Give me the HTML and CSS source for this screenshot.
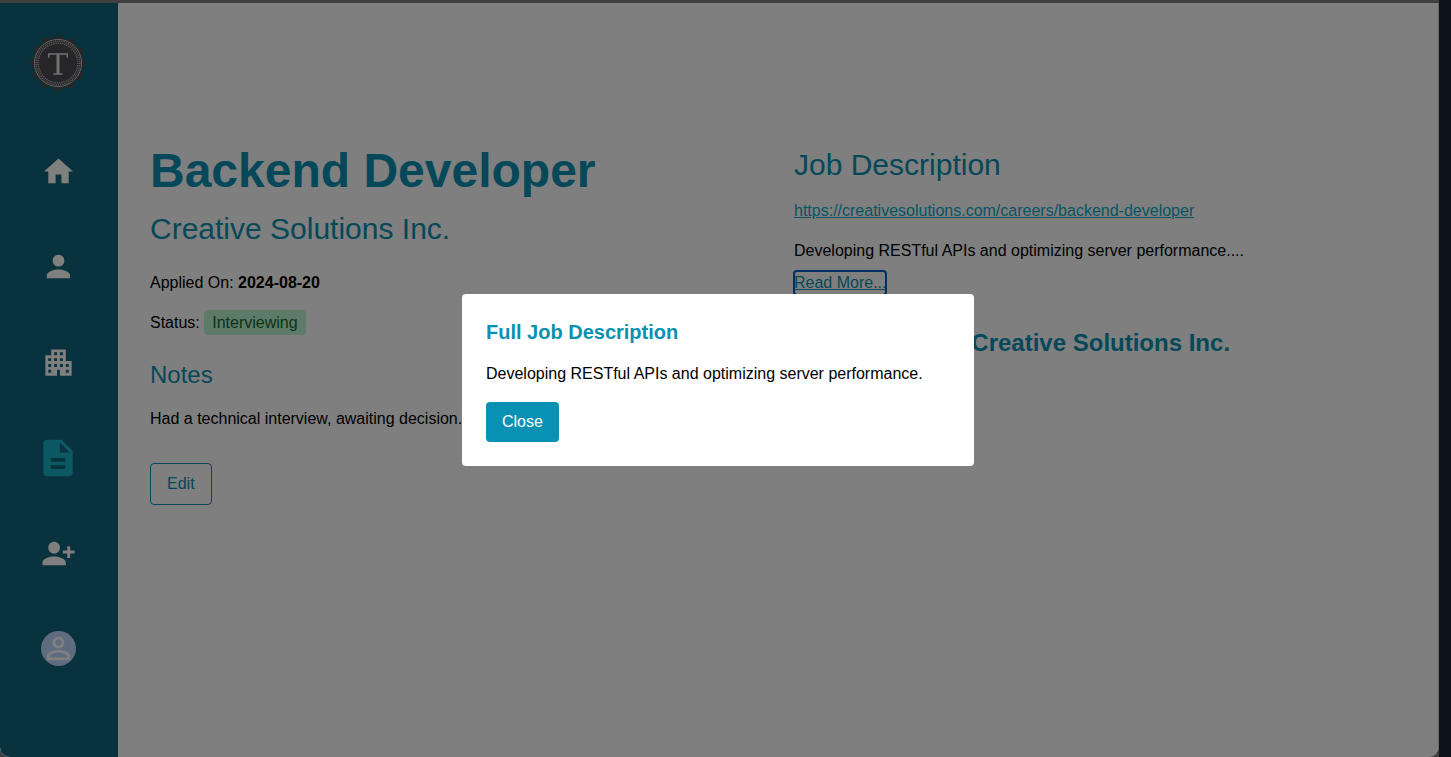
FILE: index.html
```html
<!DOCTYPE html>
<html lang="en">
<head>
<meta charset="utf-8">
<meta name="viewport" content="width=device-width, initial-scale=1">
<title>Backend Developer</title>
<link rel="stylesheet" href="styles.css">
</head>
<body>
<div class="window">
  <aside class="sidebar">
    <a class="logo" href="#" aria-label="Home page">
      <svg viewBox="0 0 56 56" aria-hidden="true">
        <circle cx="28" cy="28" r="25" fill="#4c4c50"/>
        <circle cx="28" cy="28" r="23.500" fill="none" stroke="#4c4c50" stroke-width="9" stroke-linecap="round" stroke-dasharray="0 12.304"/>
        <circle cx="28" cy="28" r="23.600" fill="none" stroke="#c4c4c4" stroke-width="1"/>
        <circle cx="28" cy="28" r="21.800" fill="none" stroke="#b4b4b4" stroke-width="1.400" stroke-dasharray="1.200 1"/>
        <circle cx="28" cy="28" r="19.800" fill="none" stroke="#b4b4b4" stroke-width="1.400" stroke-dasharray="1.200 1"/>
        <path d="M18.800 22.800v-3.800h18.400v3.800M23.500 39h9" fill="none" stroke="#e0e0e0" stroke-width="1.500"/>
        <path d="M28 19v20" stroke="#e0e0e0" stroke-width="3"/>
      </svg>
    </a>
    <nav class="menu" aria-label="Main">
      <a href="#" aria-label="Home"><svg viewBox="0 0 24 24"><path d="M10 20v-6h4v6h5v-8h3L12 3 2 12h3v8z"/></svg></a>
      <a href="#" aria-label="Profile"><svg viewBox="0 0 24 24"><path d="M12 12c2.210 0 4-1.790 4-4s-1.790-4-4-4-4 1.790-4 4 1.790 4 4 4zm0 2c-2.670 0-8 1.340-8 4v2h16v-2c0-2.660-5.330-4-8-4z"/></svg></a>
      <a href="#" aria-label="Companies"><svg viewBox="0 0 24 24"><path d="M17 11V3H7v4H3v14h8v-4h2v4h8V11h-4zM7 19H5v-2h2v2zm0-4H5v-2h2v2zm0-4H5V9h2v2zm4 4H9v-2h2v2zm0-4H9V9h2v2zm0-4H9V5h2v2zm4 8h-2v-2h2v2zm0-4h-2V9h2v2zm0-4h-2V5h2v2zm4 12h-2v-2h2v2zm0-4h-2v-2h2v2z"/></svg></a>
      <a class="active" href="#" aria-label="Applications" aria-current="page"><svg viewBox="0 0 24 24"><path d="M14 2H6c-1.100 0-1.990.9-1.990 2L4 20c0 1.100.89 2 1.990 2H18c1.100 0 2-.9 2-2V8l-6-6zm2 16H8v-2h8v2zm0-4H8v-2h8v2zm-3-5V3.500L18.500 9H13z"/></svg></a>
      <a href="#" aria-label="Add contact"><svg viewBox="0 0 24 24"><path d="M13 8c0-2.210-1.790-4-4-4S5 5.790 5 8s1.790 4 4 4 4-1.790 4-4zm2 2v2h3v3h2v-3h3v-2h-3V7h-2v3h-3zM1 18v2h16v-2c0-2.660-5.330-4-8-4s-8 1.340-8 4z"/></svg></a>
      <a class="avatar" href="#" aria-label="Account"><svg viewBox="0 0 24 24"><path d="M12 5.900c1.160 0 2.100.94 2.100 2.100s-.94 2.100-2.100 2.100S9.900 9.160 9.900 8s.94-2.100 2.100-2.100m0 9c2.970 0 6.100 1.460 6.100 2.100v1.100H5.900V17c0-.64 3.130-2.100 6.100-2.100M12 4C9.790 4 8 5.790 8 8s1.790 4 4 4 4-1.790 4-4-1.790-4-4-4zm0 9c-2.670 0-8 1.340-8 4v3h16v-3c0-2.660-5.330-4-8-4z"/></svg></a>
    </nav>
  </aside>
  <main class="content">
    <section class="stack">
      <h1>Backend Developer</h1>
      <h2 class="company">Creative Solutions Inc.</h2>
      <p class="first">Applied On: <strong>2024-08-20</strong></p>
      <p>Status: <span class="status">Interviewing</span></p>
      <h3>Notes</h3>
      <p>Had a technical interview, awaiting decision.</p>
      <button class="edit" type="button">Edit</button>
    </section>
    <section class="stack">
      <h2>Job Description</h2>
      <a class="link url" href="#">https://creativesolutions.com/careers/backend-developer</a>
      <p>Developing RESTful APIs and optimizing server performance....</p>
      <button class="link more" type="button">Read More...</button>
      <h3 class="information">Information for Creative Solutions Inc.</h3>
    </section>
  </main>
  <div class="overlay">
    <div class="modal" role="dialog" aria-modal="true" aria-labelledby="modal-title">
      <h2 id="modal-title">Full Job Description</h2>
      <p>Developing RESTful APIs and optimizing server performance.</p>
      <button class="close" type="button">Close</button>
    </div>
  </div>
</div>
</body>
</html>
```
FILE: styles.css
```css
* {
  box-sizing: border-box;
}

body {
  margin: 0;
  min-height: 100vh;
  display: flex;
  padding: 3px 12px 0 0;
  background: linear-gradient(to left, #0b1418 12px, #404040 12px);
  font: 16px/24px "Liberation Sans", Arial, sans-serif;
  color: #000;
}

h1, h2, h3, p {
  margin: 0;
}

button {
  font: inherit;
  cursor: pointer;
}

.window {
  position: relative;
  flex: 1;
  display: flex;
  background: #fff;
  border-right: 1px solid #666;
  border-radius: 0 0 10px 10px;
  overflow: hidden;
}

.sidebar {
  flex: none;
  width: 118px;
  padding: 32px 2px 86px 0;
  display: flex;
  flex-direction: column;
  align-items: center;
  gap: 58px;
  background: #10647a;
}

.logo svg {
  display: block;
  width: 56px;
  height: 56px;
}

.menu {
  flex: 1;
  display: flex;
  flex-direction: column;
  justify-content: space-between;
  align-items: center;
}

.menu a {
  display: flex;
  align-items: center;
  height: 44px;
  color: #fff;
}

.menu svg {
  display: block;
  width: 35px;
  height: 35px;
  fill: currentColor;
}

.menu .active {
  color: #1ab0ca;
}

.menu .active svg {
  width: 44px;
  height: 44px;
}

.menu .avatar svg {
  border-radius: 50%;
  background: #bfd6ff;
}

.content {
  flex: 1;
  display: grid;
  grid-template-columns: 1fr 1fr;
  gap: 32px;
  padding: 144px 32px 32px;
}

.stack {
  display: flex;
  flex-direction: column;
  align-items: flex-start;
  gap: 16px;
  min-width: 0;
}

h1, h2, h3 {
  color: #0891b2;
}

h1 {
  font-size: 48px;
  line-height: 48px;
}

.stack h2 {
  font-size: 30px;
  line-height: 36px;
  font-weight: 400;
}

.stack h3 {
  margin-top: 8px;
  font-size: 24px;
  line-height: 32px;
  font-weight: 400;
}

.first {
  margin-top: 8px;
}

.status {
  padding: 4px 8px;
  border-radius: 4px;
  background: #bbf7d0;
  color: #166534;
}

.edit {
  margin-top: 16px;
  padding: 8px 16px;
  border: 1px solid #0891b2;
  border-radius: 4px;
  background: none;
  color: #0891b2;
}

.link {
  padding: 0;
  border: 0;
  background: none;
  color: #0891b2;
  text-decoration: underline;
}

.url {
  color: #0cabc8;
}

.more {
  margin-top: -8px;
  border-radius: 3px;
  outline: 2px solid #005fcc;
  outline-offset: -1px;
}

.stack .information {
  margin-top: 16px;
  font-weight: 700;
}

.overlay {
  position: absolute;
  inset: 0;
  padding-right: 2px;
  display: grid;
  place-items: center;
  background: rgba(0, 0, 0, 0.5);
}

.modal {
  width: 100%;
  max-width: 512px;
  padding: 24px;
  display: flex;
  flex-direction: column;
  align-items: flex-start;
  gap: 16px;
  border-radius: 4px;
  background: #fff;
}

.modal h2 {
  font-size: 20px;
  line-height: 28px;
}

.close {
  padding: 8px 16px;
  border: 0;
  border-radius: 4px;
  background: #0891b2;
  color: #fff;
}
```
